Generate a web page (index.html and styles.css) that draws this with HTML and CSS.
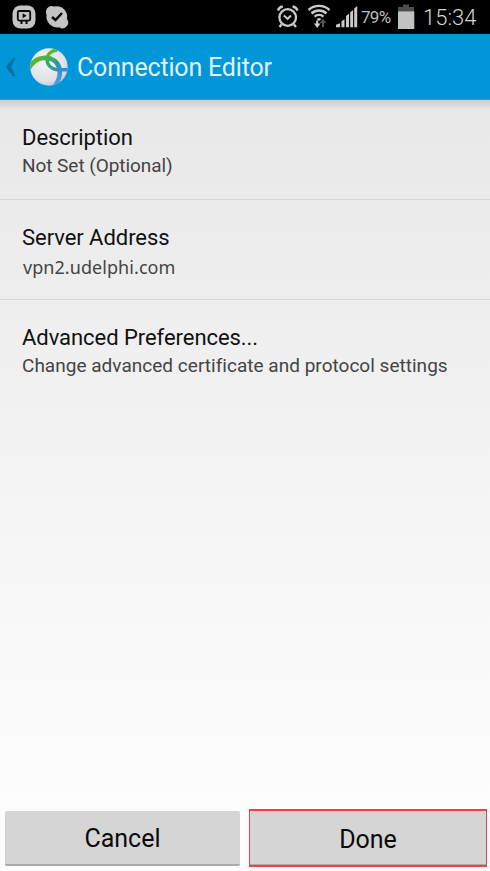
FILE: index.html
```html
<!DOCTYPE html>
<html lang="en">
<head>
<meta charset="utf-8">
<title>Connection Editor</title>
<link rel="stylesheet" href="styles.css">
</head>
<body>
<div class="status">
  <svg class="notifications" width="80" height="34" viewBox="0 0 80 34">
    <rect x="12.5" y="5.5" width="23" height="23" rx="8" fill="#c4c4c4"/>
    <rect x="17.8" y="11" width="12.4" height="9.6" rx="1.5" fill="none" stroke="#080808" stroke-width="1.8"/>
    <path d="M22.6 13.2v5l4-2.5z" fill="#080808"/>
    <path d="M21.5 21v3M26.5 21v3" stroke="#080808" stroke-width="2"/>
    <path d="M46 11a5.7 5.7 0 0 1 8-4.4A10.5 10.5 0 0 1 67 19a5.8 5.8 0 0 1-8 8.2A10.6 10.6 0 0 1 46.600 15Q45.600 13 46 11z" fill="#c4c4c4"/>
    <path d="M52 17l3.500 3 6.500-7" fill="none" stroke="#080808" stroke-width="2.500"/>
  </svg>
  <svg class="signals" width="84" height="34" viewBox="276 0 84 34">
    <g fill="none" stroke="#c9c9c9">
      <circle cx="287.700" cy="17.500" r="8.300" stroke-width="2.300"/>
      <path d="M277.800 10.500a7 7 0 0 1 5-4M297.600 10.500a7 7 0 0 0-5-4M281.500 24.500l-2 2.500M294 24.500l2 2.500" stroke-width="2.400"/>
      <path d="M283.800 15.500l3.900 3.300 3.300-3.300" stroke-width="2"/>
      <path d="M308.500 10a15.500 15.500 0 0 1 21 0M311.500 13.500a11 11 0 0 1 15 0M314.500 16.700a6.500 6.500 0 0 1 9 0" stroke-width="2.400"/>
    </g>
    <path d="M316.500 19l2.500-1 2.500 1-2.500 2z" fill="#c9c9c9"/>
    <path d="M316.200 20.500h2v3h2.300l-3.300 4.500-3.300-4.500h2.300z" fill="#d0d0d0"/>
    <path d="M323 19l3.300 4h-2.200v4h-2.200v-4h-2.200z" fill="#555"/>
    <path d="M336 27.300v-2.500l4-1.500v4zM341.500 27.300v-6l3-2v8zM346 27.300V16l3-2.500v13.800zM350.200 27.300V12.300l2.900-2.300v17.300zM354.200 27.300V8.500l3-2.500v21.300z" fill="#c9c9c9"/>
  </svg>
  <span class="percent">79%</span>
  <svg class="battery" width="18" height="34" viewBox="397 0 18 34">
    <path d="M398 11.500V7h5V4.500h6V7h5v4.500z" fill="#4d4d4d"/>
    <path d="M398 11.300h16.300V29H398z" fill="#c2c2c2"/>
  </svg>
  <span class="clock">15:34</span>
</div>
<header class="bar">
  <svg class="brand" width="76" height="64" viewBox="0 34 76 64">
    <defs>
      <radialGradient id="ball" cx=".4" cy=".35" r=".75"><stop stop-color="#f4f4f6"/><stop offset=".7" stop-color="#dfe2e6"/><stop offset="1" stop-color="#b4c0ca"/></radialGradient>
      <linearGradient id="arc" x1="40" y1="55" x2="60" y2="80" gradientUnits="userSpaceOnUse"><stop stop-color="#5ab830"/><stop offset=".3" stop-color="#45ad55"/><stop offset=".55" stop-color="#2795a8"/><stop offset="1" stop-color="#4a98e6"/></linearGradient>
      <linearGradient id="loop" x1="52" y1="50" x2="62" y2="71" gradientUnits="userSpaceOnUse"><stop stop-color="#64b931"/><stop offset=".4" stop-color="#31a870"/><stop offset="1" stop-color="#3489da"/></linearGradient>
      <clipPath id="disc"><circle cx="49" cy="67" r="18.700"/></clipPath>
    </defs>
    <path d="M13.600 57.500h1.900L11 67l4.500 9h-2.800L6 67z" fill="#006e9f"/>
    <circle cx="49" cy="67" r="18.700" fill="url(#ball)"/>
    <g clip-path="url(#disc)" fill="none">
      <path d="M29 68C33 61.500 38 58.500 43 58C51 57 57 61 59 67C60.500 72 60 79 55 86" stroke="url(#arc)" stroke-width="4.600"/>
      <path d="M57 50C50 51 47 55 47 59C47 65 51 68.500 56 69.500C60 70.300 64 69.800 69 69.300" stroke="url(#loop)" stroke-width="3.500"/>
    </g>
  </svg>
  <h1 class="title">Connection Editor</h1>
</header>
<main class="settings">
  <section class="item"><h2 class="name description">Description</h2><p class="detail unset">Not Set (Optional)</p></section>
  <section class="item"><h2 class="name server">Server Address</h2><p class="detail address">vpn2.udelphi.com</p></section>
  <section class="item last"><h2 class="name advanced">Advanced Preferences...</h2><p class="detail">Change advanced certificate and protocol settings</p></section>
</main>
<footer class="actions">
  <button class="button cancel">Cancel</button>
  <button class="button done">Done</button>
</footer>
</body>
</html>
```
FILE: styles.css
```css
* { box-sizing: border-box; }
body {
  margin: 0;
  height: 871px;
  display: flex;
  flex-direction: column;
  overflow: hidden;
  font-family: Roboto, sans-serif;
  color: #111;
  background: #fff;
}
h1, h2, p { margin: 0; font-weight: 400; white-space: nowrap; }
svg { display: block; flex: none; }
.status { height: 34px; flex: none; display: flex; background: #000; color: #bdbdbd; }
.signals { margin-left: 196px; }
.percent { width: 36px; padding-left: 1px; font-size: 17px; line-height: 35px; letter-spacing: -.7px; }
.battery { margin-left: 1px; }
.clock { margin-left: 8px; font-size: 22px; line-height: 35px; font-weight: 300; color: #d2d2d2; }
.bar { height: 66px; flex: none; display: flex; background: #0096d8; border-bottom: 1px solid #578fa9; }
.title { padding-left: 1px; color: #e3f1f8; font-size: 25px; line-height: 68px; letter-spacing: -.18px; }
.settings {
  flex: 1;
  background: linear-gradient(#ccc 0, #e8e8e800 10px), linear-gradient(#e8e8e8, #efefef 230px, #f8f8f8 510px, #fdfdfd 710px);
}
.item { height: 100px; padding: 24px 22px 0; border-bottom: 1px solid #d6d6d6; }
.item.last { border: 0; }
.name { font-size: 22px; line-height: 28px; letter-spacing: -.05px; }
.detail { font-size: 19px; line-height: 27px; letter-spacing: .02px; color: #444; }
.unset { letter-spacing: -.05px; }
.address { font-family: "Noto Sans", sans-serif; font-size: 18px; line-height: 31px; padding-left: 1px; letter-spacing: .06px; }
.actions { height: 62px; flex: none; display: flex; gap: 9px; padding: 0 3px 4px 5px; background: #fdfdfd; }
.button {
  border: 0;
  border-radius: 2px;
  background: #d5d5d5;
  font: 25px/50px Roboto, sans-serif;
  color: #0b0b0b;
  padding: 0;
}
.cancel { width: 235px; height: 55px; margin-top: 2px; padding-top: 3px; border-bottom: 2px solid #aaa; }
.done { width: 238px; height: 58px; padding-top: 3px; border: 1px solid #ef3f49; border-width: 2px 1px; border-radius: 0; box-shadow: inset 0 -1px #aaa; }
```
